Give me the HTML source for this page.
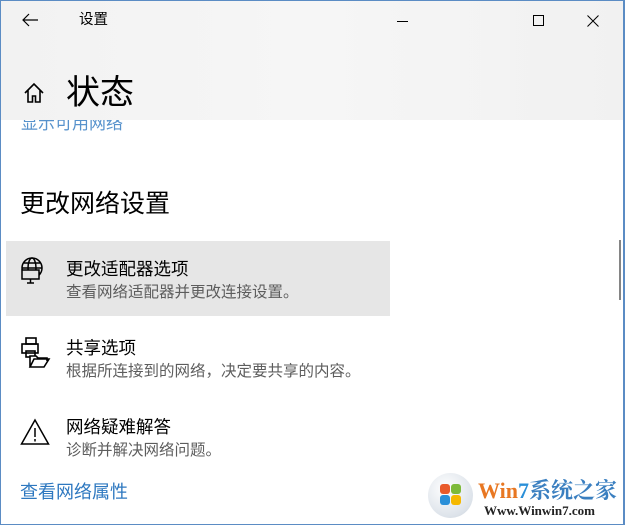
<!DOCTYPE html>
<html><head><meta charset="utf-8"><style>
*{margin:0;padding:0;box-sizing:border-box}
body{width:625px;height:525px;overflow:hidden;background:#fff;font-family:"Liberation Sans","Noto Sans CJK SC",sans-serif;position:relative;color:#000}
.frame{position:absolute;inset:0;border:1px solid #5b8cc4;border-right:2px solid #5b8cc4}
.hdr{position:absolute;left:1px;top:1px;right:2px;height:119px;background:linear-gradient(90deg,#f2f2f2,#f6f6f6 50%,#f1f1f1)}
.t{position:absolute;white-space:nowrap;line-height:1}
.blue{color:#2e78c0}
.gray{color:#5d5d5d}
.sel{position:absolute;left:6px;top:241px;width:384px;height:75px;background:#e6e6e6}
svg{position:absolute}
</style></head><body>
<div class="hdr"></div>
<div class="sel"></div>
<svg style="left:20px;top:12px" width="20" height="16" viewBox="0 0 20 16"><path d="M18 8H3M9 2L3 8l6 6" fill="none" stroke="#000" stroke-width="1.2"/></svg>
<div class="t" style="left:79px;top:13px;font-size:14.5px">设置</div>
<div style="position:absolute;left:397px;top:21px;width:11px;height:1px;background:#000"></div>
<div style="position:absolute;left:533px;top:15px;width:11px;height:11px;border:1px solid #000"></div>
<svg style="left:587px;top:15px" width="12" height="12" viewBox="0 0 12 12"><path d="M0.5 0.5l11 11M11.5 0.5l-11 11" stroke="#000" stroke-width="1"/></svg>
<svg style="left:23px;top:82px" width="22" height="22" viewBox="0 0 22 22"><path d="M2 11L11 2l9 9M5 8v12h4.5v-6h3v6H17V8" fill="none" stroke="#000" stroke-width="1.6"/></svg>
<div class="t" style="left:66px;top:76px;font-size:34px">状态</div>
<div style="position:absolute;left:1px;top:120px;width:620px;height:14px;overflow:hidden"><div class="t blue" style="left:20px;top:-5px;font-size:17px;opacity:.8">显示可用网络</div></div>
<div class="t" style="left:20px;top:192px;font-size:25px">更改网络设置</div>
<svg style="left:20px;top:257px" width="30" height="30" viewBox="0 0 30 30" fill="none" stroke="#000" stroke-width="1.5"><circle cx="12" cy="11" r="10"/><ellipse cx="12" cy="11" rx="4" ry="10"/><path d="M2 11h20M4 6h16M4 16h16"/><rect x="2" y="13" width="17" height="9" fill="#e6e6e6"/><path d="M10.5 22v4M7 26h7"/></svg>
<div class="t" style="left:66px;top:261px;font-size:17.5px">更改适配器选项</div>
<div class="t gray" style="left:66px;top:285px;font-size:15.5px">查看网络适配器并更改连接设置。</div>
<svg style="left:20px;top:337px" width="32" height="32" viewBox="0 0 32 32" fill="none" stroke="#000" stroke-width="1.6"><rect x="6" y="1" width="10" height="6"/><rect x="2" y="7" width="16" height="9"/><rect x="6" y="14" width="9" height="6"/><path d="M10 30V19h6l2 2h9v3M10 30l4-8h15l-5 8z" fill="#fff"/></svg>
<div class="t" style="left:66px;top:340px;font-size:17.5px">共享选项</div>
<div class="t gray" style="left:66px;top:364px;font-size:15.5px">根据所连接到的网络，决定要共享的内容。</div>
<svg style="left:20px;top:418px" width="30" height="28" viewBox="0 0 30 28" fill="none" stroke="#000" stroke-width="1.5"><path d="M15 2L1.5 26h27z"/><path d="M15 10v9M15 21v2.5"/></svg>
<div class="t" style="left:66px;top:419px;font-size:17.5px">网络疑难解答</div>
<div class="t gray" style="left:66px;top:443px;font-size:15.5px">诊断并解决网络问题。</div>
<div class="t blue" style="left:20px;top:483px;font-size:18px">查看网络属性</div>
<div style="position:absolute;left:619px;top:240px;width:2px;height:60px;background:#858585"></div>
<div style="position:absolute;left:428px;top:473px;width:45px;height:45px;border-radius:50%;background:radial-gradient(circle at 40% 35%,#fff,#dde3ea 70%,#c7ced6)"></div>
<div style="position:absolute;left:440px;top:484px;width:10px;height:10px;background:#e95b2b;border-radius:3px"></div>
<div style="position:absolute;left:451px;top:484px;width:10px;height:10px;background:#7dba3a;border-radius:3px"></div>
<div style="position:absolute;left:440px;top:495px;width:10px;height:10px;background:#2a8fd8;border-radius:3px"></div>
<div style="position:absolute;left:451px;top:495px;width:10px;height:10px;background:#f5b800;border-radius:3px"></div>
<div class="t" style="left:478px;top:480px;font-size:22px;font-weight:bold;font-family:'Liberation Serif','Noto Serif CJK SC',serif"><span style="color:#e87722">Win</span><span style="color:#2a8fd8">7</span><span style="color:#3a7fc0">系统之家</span></div>
<div class="t" style="left:484px;top:504px;font-size:13px;font-weight:bold;font-family:'Liberation Serif',serif;color:#222">Www.Winwin7.com</div>
<div class="frame"></div>
</body></html>
